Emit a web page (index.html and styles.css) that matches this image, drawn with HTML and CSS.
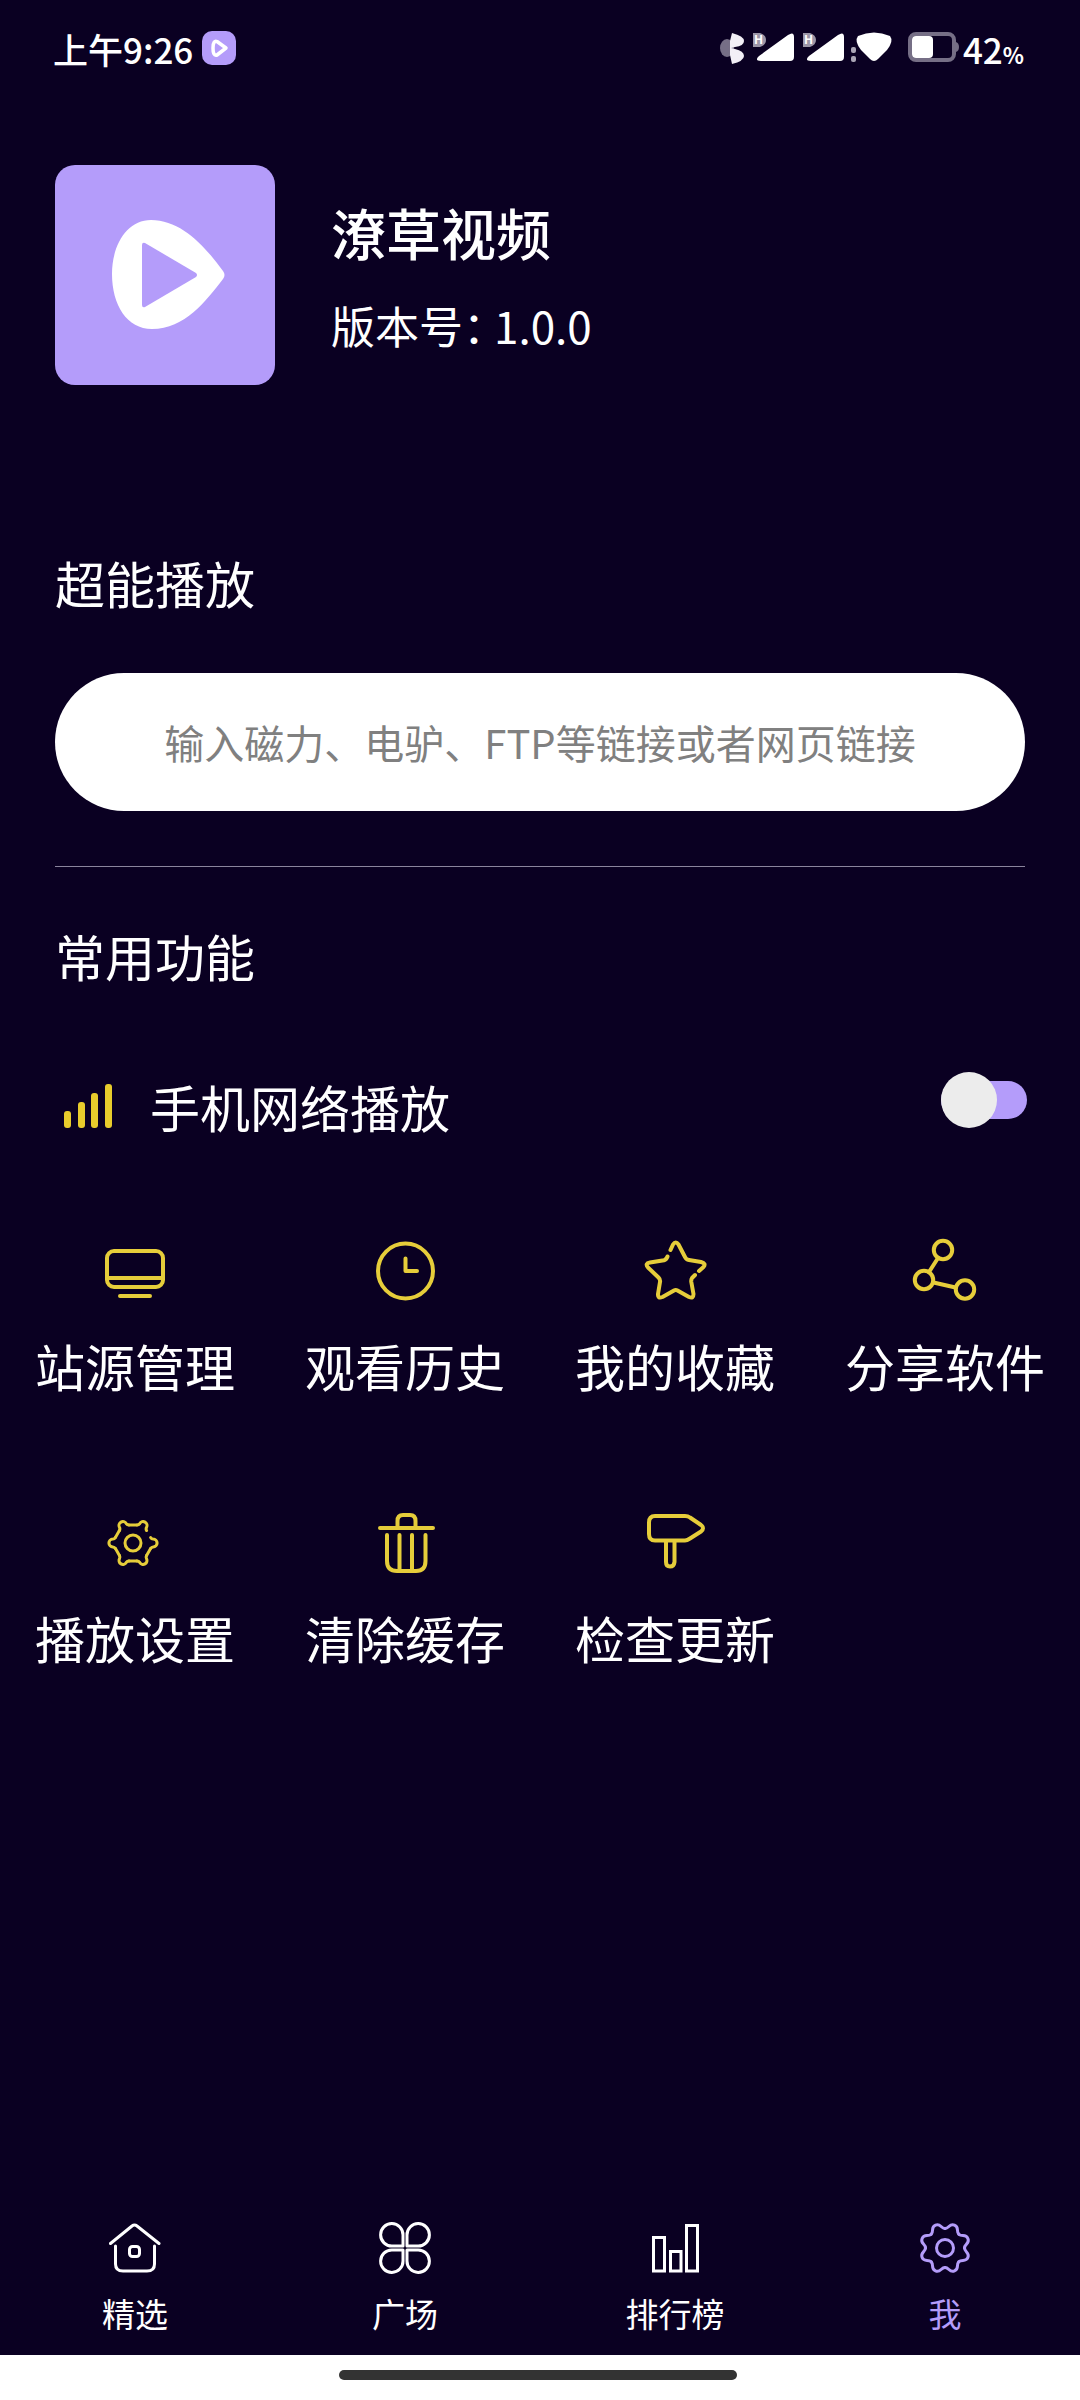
FILE: index.html
```html
<!DOCTYPE html>
<html lang="zh-CN">
<head>
<meta charset="utf-8">
<meta name="viewport" content="width=device-width, initial-scale=1">
<title>潦草视频</title>
<link rel="stylesheet" href="styles.css">
</head>
<body>
<header class="status">
  <div class="status-left">
    <span>上午9:26</span>
    <svg class="status-app" viewBox="0 0 34 34" aria-hidden="true"><rect width="34" height="34" rx="10" fill="#b49cfa"/><path d="M11 17C11 11 13 9.500 15 10.500L24 17L15 24C12 25 11 22 11 17Z" fill="none" stroke="#fff" stroke-width="3.500" stroke-linejoin="round"/></svg>
  </div>
  <div class="status-right">
    <svg class="status-signals" viewBox="0 0 240 40" aria-hidden="true">
      <ellipse cx="7" cy="20" rx="7" ry="9" fill="#766f86"/>
      <path d="M12 5Q24 8 24 13Q24 18 15 19L11 20L15 21Q24 23 24 28Q24 33 12 36L10 27V13Z" fill="#f2eff6"/>
      <path d="M33 5H40Q46 7 46 12Q46 17 40 19H33ZM83 5H90Q96 7 96 12Q96 17 90 19H83Z" fill="#9c96a8"/>
      <text x="34" y="16" class="net">H</text><text x="84" y="16" class="net">H</text>
      <path d="M39 28L68 7Q74 3 74 9V29Q74 33 70 33H41Q34 33 39 28ZM89 28L118 7Q124 3 124 9V29Q124 33 120 33H91Q84 33 89 28Z" fill="#fff"/>
      <rect x="131" y="19" width="5" height="6" rx="2" fill="#aaa5b5"/><rect x="131" y="28" width="5" height="6" rx="2" fill="#aaa5b5"/>
      <path d="M138 8Q154 1 170 8Q174 13 167 22L158 31Q154 35 150 31L141 22Q134 13 138 8Z" fill="#fff"/>
      <rect x="190" y="6" width="44" height="26" rx="6" fill="none" stroke="#766f86" stroke-width="4"/>
      <rect x="192" y="8" width="21" height="22" rx="4" fill="#fff"/><path d="M236 14Q239 15 239 19T236 24Z" fill="#766f86"/>
    </svg>
    <span class="battery">42<b class="percent">%</b></span>
  </div>
</header>

<main class="main">
  <section class="profile">
    <svg class="logo" viewBox="0 0 220 220" role="img" aria-label="潦草视频">
      <rect width="220" height="220" rx="20" fill="#b49cfa"/>
      <path fill="#fff" d="M96 55C72 55 57 80 57 109C57 140 72 164 97 164C130 164 151 136 168 114Q171 110 168 106C150 81 126 55 96 55Z"/>
      <path fill="#b49cfa" d="M87 80Q87 77 90 78L141 108Q143 110 141 112L90 142Q87 143 87 140Z"/>
    </svg>
    <div class="profile-text">
      <h1 class="name">潦草视频</h1>
      <p class="version"><span class="version-label">版本号：</span><span>1.0.0</span></p>
    </div>
  </section>

  <section class="play">
    <h2 class="heading"><label for="link">超能播放</label></h2>
    <input class="link-input" id="link" type="text" placeholder="输入磁力、电驴、FTP等链接或者网页链接">
  </section>

  <section class="features">
    <h2 class="heading">常用功能</h2>
    <div class="setting">
      <label class="setting-label" for="mobile-play">
        <svg class="bars" viewBox="0 0 48 44" fill="#e8cc2c" aria-hidden="true"><rect y="27" width="7" height="17" rx="3"/><rect x="14" y="18" width="7" height="26" rx="3"/><rect x="27" y="9" width="7" height="35" rx="3"/><rect x="41" width="7" height="44" rx="3"/></svg>
        手机网络播放
      </label>
      <input class="switch" id="mobile-play" type="checkbox" role="switch">
    </div>
  </section>

  <section class="tools">
    <button class="tool" type="button">
      <svg class="tool-icon" viewBox="0 0 72 72"><rect x="8" y="16" width="56" height="36" rx="7"/><path d="M9 43H63M21 61H51"/></svg>
      站源管理
    </button>
    <button class="tool" type="button">
      <svg class="tool-icon" viewBox="0 0 72 72"><circle cx="36.500" cy="36" r="27.500"/><path d="M36.500 23.500V36H48"/></svg>
      观看历史
    </button>
    <button class="tool" type="button">
      <svg class="tool-icon" viewBox="0 0 72 72"><path d="M31.500 15L34 9.500Q36.700 5.500 39.500 9.500L46 22Q47 24.500 50 25L62 27Q67.500 28.500 64.500 32L60 36M56 40L53 43Q52 44.500 52.300 47L54.500 59Q54.500 64 50 62L38.500 55.500Q36.700 54.500 35 55.500L23.500 62Q18.500 64 19 59L21 47Q21.500 44.500 19.500 42.500L9 32.500Q5.500 28.500 11 27.500L25 25.200Q27.500 24.500 28.500 21.500"/></svg>
      我的收藏
    </button>
    <button class="tool" type="button">
      <svg class="tool-icon" viewBox="0 0 72 72"><circle cx="34" cy="15" r="9.200"/><circle cx="15" cy="45" r="9.200"/><circle cx="56" cy="54.500" r="9.200"/><path d="M29 23L20 37M24.500 47.500L46.500 52.500"/></svg>
      分享软件
    </button>
    <button class="tool" type="button">
      <svg class="tool-icon fine" viewBox="0 0 72 72">
        <defs><path id="knob" d="M17.600 -5.500Q18.500 -4 20.200 -3.900A3.900 3.900 0 0 1 20.200 3.900Q18.500 4 17.600 5.500"/><path id="edge" d="M17.600 5.500L13.600 12.400"/></defs>
        <g transform="translate(34 36)"><circle r="8"/>
          <use href="#knob"/><use href="#knob" transform="rotate(60)"/><use href="#knob" transform="rotate(120)"/><use href="#knob" transform="rotate(180)"/><use href="#knob" transform="rotate(240)"/><use href="#knob" transform="rotate(300)"/>
          <use href="#edge"/><use href="#edge" transform="rotate(60)"/><use href="#edge" transform="rotate(120)"/><use href="#edge" transform="rotate(180)"/><use href="#edge" transform="rotate(240)"/>
        </g>
      </svg>
      播放设置
    </button>
    <button class="tool" type="button">
      <svg class="tool-icon" viewBox="0 0 72 72"><path d="M11 21H64M28.500 20V14Q28.500 8 34 8H41Q46.500 8 46.500 14V20M18 28V54Q18 64 28 64H47Q56.500 64 56.500 54V28M30.500 28V63M43 28V63"/></svg>
      清除缓存
    </button>
    <button class="tool" type="button">
      <svg class="tool-icon" viewBox="0 0 72 72"><path d="M16 9H46Q49 9 51 10.500L62 18Q66 21 62 24.500L51 31.500Q48 33.500 46 33.500H16Q10 33.500 10 27V15.500Q10 9 16 9ZM27 34V55Q27 59.500 31 59.500T35.500 55V34"/></svg>
      检查更新
    </button>
  </section>
</main>

<nav class="tabs">
  <a class="tab" href="#featured">
    <svg class="tab-icon" viewBox="0 0 52 52"><path d="M1.500 21.500L23 4Q25.500 2 28 4L50 21.500M6.500 24V42Q6.500 49 14 49H38Q45.500 49 45.500 42V24"/><rect x="20.500" y="24.500" width="10" height="10" rx="3"/></svg>
    精选
  </a>
  <a class="tab" href="#square">
    <svg class="tab-icon" viewBox="0 0 52 52"><path d="M24 24H13A11.200 11.200 0 1 1 24 13ZM28 24V13A11.200 11.200 0 1 1 39 24ZM24 28V39A11.200 11.200 0 1 1 13 28ZM28 28H39A11.200 11.200 0 1 1 28 39Z"/></svg>
    广场
  </a>
  <a class="tab" href="#ranking">
    <svg class="tab-icon" viewBox="0 0 52 52"><path stroke-linejoin="miter" d="M4.500 15.500H15.500V49H4.500ZM21.500 29.500H32V49H21.500ZM37.500 3.500H48.500V49H37.500Z"/></svg>
    排行榜
  </a>
  <a class="tab active" href="#me" aria-current="page">
    <svg class="tab-icon" viewBox="0 0 52 52">
      <defs><path id="lobe" d="M19.500 0C19.500 4.200 25 4.400 22.900 9.500C20.800 14.600 16.700 10.800 13.800 13.800"/></defs>
      <g transform="translate(26 26)"><circle r="8.500"/>
        <use href="#lobe"/><use href="#lobe" transform="rotate(45)"/><use href="#lobe" transform="rotate(90)"/><use href="#lobe" transform="rotate(135)"/><use href="#lobe" transform="rotate(180)"/><use href="#lobe" transform="rotate(225)"/><use href="#lobe" transform="rotate(270)"/><use href="#lobe" transform="rotate(315)"/>
      </g>
    </svg>
    我
  </a>
</nav>
<footer class="system-bar"><div class="handle"></div></footer>
</body>
</html>
```

FILE: styles.css
```css
* {
  box-sizing: border-box;
}

body {
  margin: 0;
  min-height: 100vh;
  display: flex;
  flex-direction: column;
  background: #0a0022;
  color: #fff;
  font-family: "Noto Sans CJK SC", sans-serif;
}

svg {
  display: block;
  flex: none;
}

h1, h2, p {
  margin: 0;
  font-weight: 400;
}

/* Status bar */
.status {
  display: flex;
  justify-content: space-between;
  align-items: center;
  height: 96px;
  padding: 0 56px 0 53px;
  font-size: 35px;
  font-weight: 500;
}

.status-left,
.status-right {
  display: flex;
  align-items: center;
}

.status-left {
  gap: 9px;
}

.status-right {
  gap: 3px;
}

.status-app {
  width: 34px;
  height: 34px;
}

.status-signals {
  width: 240px;
  height: 40px;
}

.net {
  font-size: 12px;
  font-weight: 700;
  fill: #fff;
}

.percent {
  font-size: 22px;
}

/* Content */
.main {
  flex: 1;
  padding-top: 69px;
}

.profile,
.play,
.features {
  padding: 0 55px;
}

.profile {
  display: flex;
  gap: 56px;
}

.logo {
  width: 220px;
  height: 220px;
}

.profile-text {
  padding-top: 30px;
}

.name {
  font-size: 55px;
  font-weight: 500;
  line-height: 72px;
}

.version {
  display: flex;
  gap: 9px;
  margin-top: 28px;
  font-size: 44px;
  line-height: 60px;
}

.version-label {
  font-feature-settings: "halt";
}

.heading {
  font-size: 50px;
  line-height: 60px;
}

.play {
  margin-top: 167px;
}

.link-input {
  display: block;
  width: 100%;
  height: 138px;
  margin-top: 61px;
  padding: 0 40px;
  border: 0;
  border-radius: 69px;
  background: #fff;
  color: #222;
  font: inherit;
  font-size: 40px;
  text-align: center;
}

.link-input::placeholder {
  color: #808080;
  opacity: 1;
}

.features::before {
  content: "";
  display: block;
  height: 1px;
  margin: 55px 0 58px;
  background: #8a849c;
}

.setting {
  display: flex;
  justify-content: space-between;
  align-items: flex-start;
  margin-top: 87px;
}

.setting-label {
  display: flex;
  align-items: center;
  gap: 38px;
  padding-left: 9px;
  font-size: 50px;
  line-height: 68px;
}

.bars {
  width: 48px;
  height: 44px;
}

.switch {
  appearance: none;
  position: relative;
  display: flex;
  align-items: center;
  width: 86px;
  height: 56px;
  margin: 0 -2px 0 0;
}

.switch::before {
  content: "";
  width: 100%;
  height: 38px;
  border-radius: 19px;
  background: #b49cfa;
}

.switch::after {
  content: "";
  position: absolute;
  top: 0;
  left: 0;
  width: 56px;
  height: 56px;
  border-radius: 50%;
  background: #ececec;
}

.switch:checked::after {
  left: auto;
  right: 0;
}

.tools {
  display: grid;
  grid-template-columns: repeat(4, 1fr);
  row-gap: 112px;
  margin-top: 95px;
}

.tool {
  display: flex;
  flex-direction: column;
  align-items: center;
  gap: 28px;
  padding: 0;
  border: 0;
  background: none;
  color: inherit;
  font: inherit;
  font-size: 50px;
  line-height: 60px;
  white-space: nowrap;
}

.tool-icon {
  width: 72px;
  height: 72px;
  fill: none;
  stroke: #e6cd3a;
  stroke-width: 4px;
  stroke-linecap: round;
  stroke-linejoin: round;
}

.fine {
  stroke-width: 3px;
}

/* Bottom tabs */
.tabs {
  display: grid;
  grid-template-columns: repeat(4, 1fr);
  padding-bottom: 22px;
}

.tab {
  display: flex;
  flex-direction: column;
  align-items: center;
  gap: 19px;
  color: inherit;
  font-size: 33px;
  line-height: 40px;
  text-decoration: none;
}

.active {
  color: #b49cfa;
}

.tab-icon {
  width: 52px;
  height: 52px;
  fill: none;
  stroke: currentColor;
  stroke-width: 3px;
  stroke-linecap: round;
  stroke-linejoin: round;
}

.system-bar {
  display: flex;
  justify-content: center;
  height: 45px;
  padding: 15px 4px 0 0;
  background: #fff;
}

.handle {
  width: 37%;
  height: 10px;
  border-radius: 5px;
  background: #333;
}
```
